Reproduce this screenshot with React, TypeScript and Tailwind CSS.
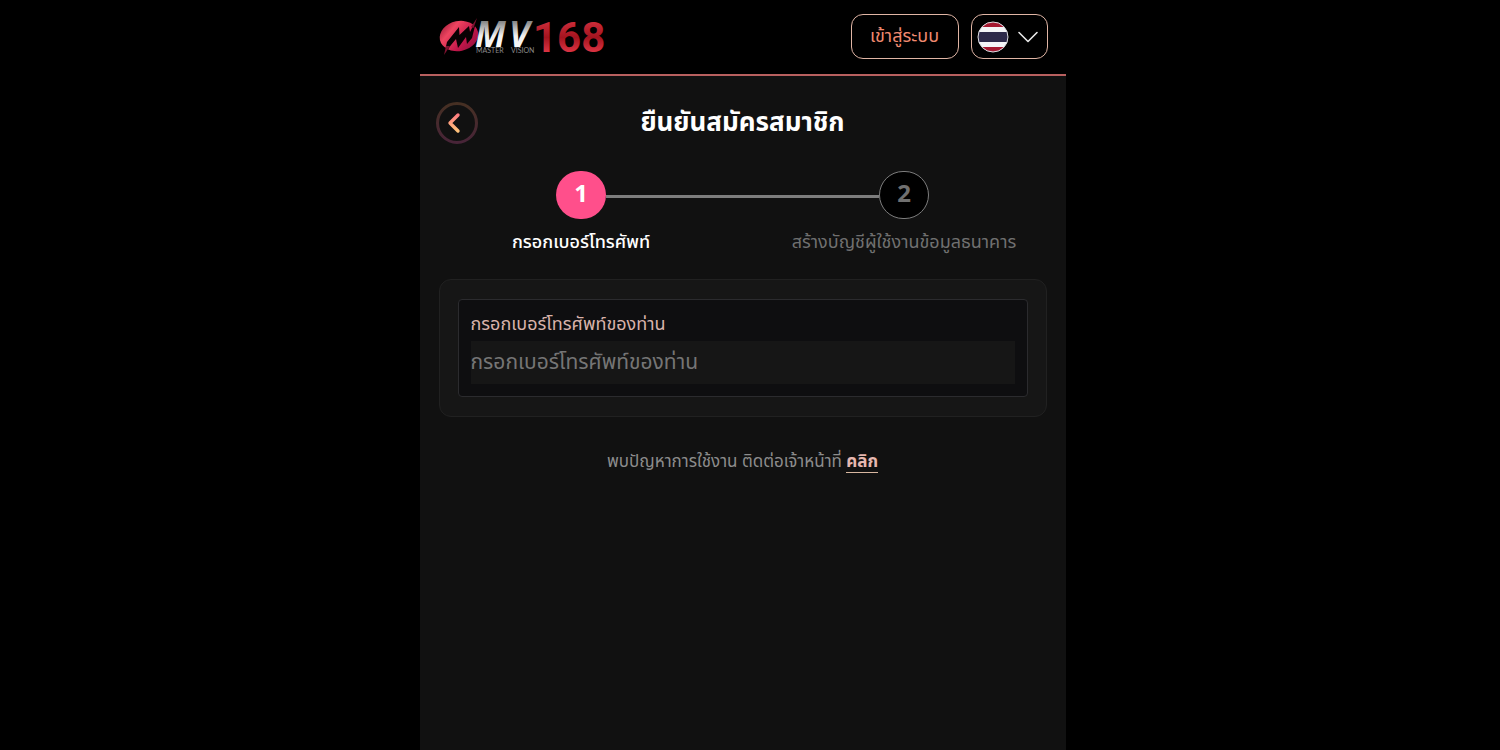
import { useState } from "react";

function Logo() {
  return (
    <svg viewBox="0 0 150 38" className="h-[38px] w-[150px] overflow-visible" role="img" aria-label="MV168 Master Vision">
      <defs>
        <linearGradient id="badge" x1="0" y1="0" x2="1" y2="1">
          <stop offset="0" stopColor="#8f1230" />
          <stop offset="0.3" stopColor="#ee4560" />
          <stop offset="0.65" stopColor="#c2164a" />
          <stop offset="1" stopColor="#86103a" />
        </linearGradient>
        <linearGradient id="silver" x1="0" y1="0" x2="0" y2="1">
          <stop offset="0.2" stopColor="#777777" />
          <stop offset="0.55" stopColor="#f0f0f0" />
          <stop offset="1" stopColor="#ffffff" />
        </linearGradient>
        <linearGradient id="ruby" x1="0" y1="0" x2="0" y2="1">
          <stop offset="0.1" stopColor="#d63240" />
          <stop offset="0.5" stopColor="#a3141f" />
          <stop offset="0.8" stopColor="#dc3444" />
        </linearGradient>
      </defs>
      <ellipse cx="20" cy="18" rx="19.5" ry="15" fill="url(#badge)" transform="rotate(-12 20 18)" />
      <path d="M5 37 8 24 20 9 20.500 17 30 8 31 14 38 0 33 20 28 26 27 19 19 30 17 21 12 27Z" fill="#0a0204" />
      <path d="M5 37 7 28 11 28ZM38 0 32 9 34.500 10Z" fill="#7d1230" />
      <text x="36" y="29" fill="url(#silver)" fontFamily="'Open Sans', sans-serif" fontSize="35" fontStyle="italic" fontWeight="700">M</text>
      <text x="70" y="29" fill="url(#silver)" fontFamily="'Open Sans', sans-serif" fontSize="35" fontStyle="italic" fontWeight="700">V</text>
      <text x="94" y="34" fill="url(#ruby)" fontFamily="'Liberation Sans Narrow', Roboto, sans-serif" fontSize="42" fontWeight="700">168</text>
      <text x="37" y="35" fill="#8a8a8a" fontFamily="Lato, sans-serif" fontSize="7">MASTER</text>
      <text x="72" y="35" fill="#8a8a8a" fontFamily="Lato, sans-serif" fontSize="7">VISION</text>
    </svg>
  );
}

function ThaiFlag() {
  return (
    <svg viewBox="0 0 32 32" className="size-8" aria-hidden="true">
      <defs>
        <clipPath id="flag-disc">
          <circle cx="16" cy="16" r="15" />
        </clipPath>
      </defs>
      <g clipPath="url(#flag-disc)">
        <rect width="32" height="32" fill="#f4f5f8" />
        <rect width="32" height="6" fill="#a51931" />
        <rect y="11" width="32" height="10" fill="#2d2a4a" />
        <rect y="26" width="32" height="6" fill="#a51931" />
      </g>
      <circle cx="16" cy="16" r="15" fill="none" stroke="#d9d9de" />
    </svg>
  );
}

function Header() {
  return (
    <header className="flex items-center justify-between border-b-2 border-[#b8605f] bg-black pt-3.5 pr-[18px] pb-[15px] pl-[19px]">
      <a href="#home">
        <Logo />
      </a>
      <div className="flex gap-3">
        <button type="button" className="h-[45px] w-[108px] rounded-xl border border-[#e0b5a5] text-lg text-[#f08a70]">
          เข้าสู่ระบบ
        </button>
        <button type="button" aria-label="ภาษาไทย" className="flex h-[45px] w-[77px] items-center gap-2 rounded-xl border border-[#e0b5a5] pl-[5px]">
          <ThaiFlag />
          <svg viewBox="0 0 22 12" className="h-3 w-[22px]" fill="none" stroke="#e8e8e8" strokeWidth="1.6" strokeLinecap="round" strokeLinejoin="round" aria-hidden="true">
            <path d="M2 1.5 11 10.5 20 1.5" />
          </svg>
        </button>
      </div>
    </header>
  );
}

function BackButton() {
  return (
    <button type="button" aria-label="ย้อนกลับ" className="size-[42px]">
      <svg viewBox="0 0 42 42" className="size-[42px]" fill="none">
        <defs>
          <linearGradient id="ring" x1="0" y1="0" x2="0" y2="1">
            <stop offset="0" stopColor="#463023" />
            <stop offset="1" stopColor="#482438" />
          </linearGradient>
          <linearGradient id="arrow" x1="0" y1="0" x2="0" y2="1">
            <stop offset="0" stopColor="#ff7d80" />
            <stop offset="1" stopColor="#ffc27a" />
          </linearGradient>
        </defs>
        <circle cx="21" cy="21" r="19.5" stroke="url(#ring)" strokeWidth="3" />
        <path d="M22 13 14 21 22 29" stroke="url(#arrow)" strokeWidth="3.4" strokeLinecap="round" strokeLinejoin="round" />
      </svg>
    </button>
  );
}

function Steps() {
  return (
    <ol className="grid grid-cols-2 text-center text-lg leading-7">
      <li className="flex flex-col items-center gap-2.5">
        <div className="grid w-full grid-cols-[1fr_50px_1fr] items-center">
          <span />
          <span className="flex h-12 items-center justify-center rounded-full bg-[#ff4f8b] text-2xl font-bold text-white">1</span>
          <span className="mt-0.5 h-[3px] bg-[#7d7d7d]" />
        </div>
        <span className="font-medium text-white">กรอกเบอร์โทรศัพท์</span>
      </li>
      <li className="flex flex-col items-center gap-2.5 text-[#707070]">
        <div className="grid w-full grid-cols-[1fr_50px_1fr] items-center">
          <span className="mt-0.5 h-[3px] bg-[#7d7d7d]" />
          <span className="flex h-12 items-center justify-center rounded-full border border-[#7d7d7d] bg-black text-2xl font-bold">2</span>
        </div>
        <span>สร้างบัญชีผู้ใช้งานข้อมูลธนาคาร</span>
      </li>
    </ol>
  );
}

export default function App() {
  const [phone, setPhone] = useState("");
  return (
    <div className="min-h-screen bg-black pr-[15px] font-['Noto_Sans_Thai','Noto_Sans',sans-serif]">
      <div className="mx-auto min-h-screen w-full max-w-[646px] bg-[#111111]">
        <Header />
        <main>
          <div className="grid grid-cols-[42px_1fr_42px] items-center px-4 pt-[26px] pb-[27px]">
            <BackButton />
            <h1 className="text-center text-[26px] leading-8 font-bold text-white">ยืนยันสมัครสมาชิก</h1>
          </div>
          <Steps />
          <form className="mx-[19px] mt-[22px] rounded-xl border border-[#212121] bg-[#161616] px-[18px] py-[19px]">
            <div className="flex flex-col rounded border border-[#2b2b2e] bg-[#0e0e10] p-3">
              <label htmlFor="phone" className="mb-[3px] text-lg leading-[26px] text-[#d9b3ab]">
                กรอกเบอร์โทรศัพท์ของท่าน
              </label>
              <input
                id="phone"
                type="tel"
                value={phone}
                onChange={(e) => setPhone(e.target.value)}
                placeholder="กรอกเบอร์โทรศัพท์ของท่าน"
                className="h-[43px] w-full bg-[#161616] text-[21px] text-white outline-none placeholder:text-[#757575]"
              />
            </div>
          </form>
          <p className="mt-[31px] text-center text-[17px] leading-7 text-[#8c8c8c]">
            พบปัญหาการใช้งาน ติดต่อเจ้าหน้าที่{" "}
            <a href="#contact" className="inline-block border-b border-[#d8b7a0] leading-5 font-bold text-[#e6b8b0]">
              คลิก
            </a>
          </p>
        </main>
      </div>
    </div>
  );
}
